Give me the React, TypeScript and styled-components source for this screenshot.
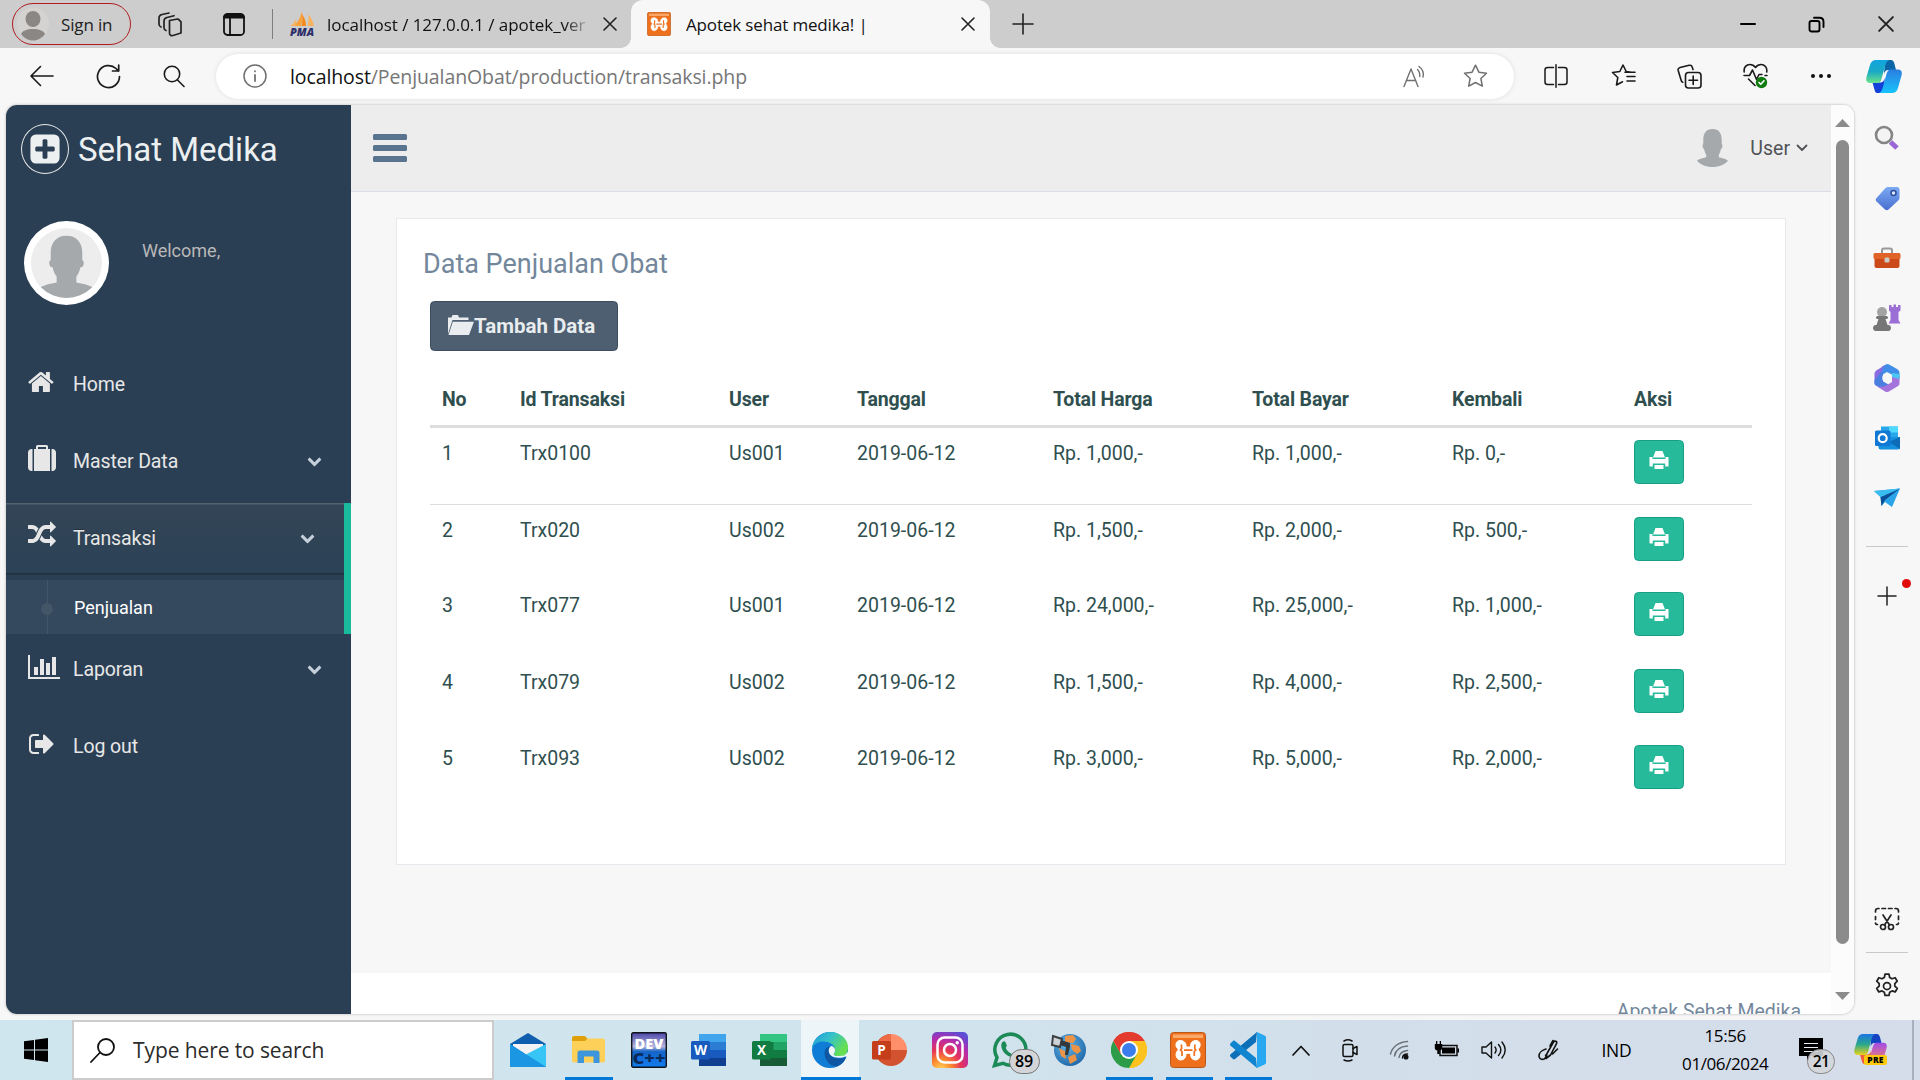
import React from "react";
import styled, { createGlobalStyle, css } from "styled-components";

const ui = `"Open Sans", "Noto Sans", sans-serif`;
const web = `Roboto, "Liberation Sans", sans-serif`;

const GlobalStyle = createGlobalStyle`
  * { box-sizing: border-box; }
  body { margin: 0; background: #f7f7f7; overflow: hidden; }
  svg { display: block; flex: none; }
`;

/* ---------- shared ---------- */

const Screen = styled.div`
  width: 1920px;
  height: 1080px;
  display: flex;
  flex-direction: column;
  overflow: hidden;
  background: #f7f7f7;
  font-family: ${ui};
  white-space: nowrap;
`;

const Cell = styled.div<{ w: number }>`
  width: ${(p) => p.w}px;
  height: 100%;
  flex: none;
  display: flex;
  align-items: center;
  justify-content: center;
`;

const Spacer = styled.div`
  flex: 1;
`;

/* ---------- tab strip ---------- */

const TabStrip = styled.div`
  height: 48px;
  flex: none;
  display: flex;
  align-items: center;
  background: #cdcdcd;
  color: #111;
`;

const SignIn = styled.button`
  width: 119px;
  height: 42px;
  margin-left: 12px;
  padding: 0 0 0 4px;
  display: flex;
  align-items: center;
  gap: 12px;
  border: 1.5px solid #b01c22;
  border-radius: 21px;
  background: transparent;
  font: 17px ${ui};
  letter-spacing: -0.15px;
  color: #222;
`;

const StripDivider = styled.div`
  width: 1px;
  height: 30px;
  margin-left: 13px;
  background: #7d7d7d;
`;

const IdleTab = styled.div`
  width: 358px;
  height: 48px;
  padding: 0 14px 0 16px;
  display: flex;
  align-items: center;
  gap: 12px;
  font-size: 17px;
`;

const TabTitle = styled.span<{ fade?: boolean; spacing: number }>`
  flex: 1;
  overflow: hidden;
  letter-spacing: ${(p) => p.spacing}px;
  ${(p) =>
    p.fade &&
    css`
      mask-image: linear-gradient(90deg, #000 90%, transparent 100%);
    `}
`;

const ActiveTab = styled.div`
  position: relative;
  width: 359px;
  height: 48px;
  padding: 0 15px 0 16px;
  display: flex;
  align-items: center;
  gap: 15px;
  border-radius: 12px 12px 0 0;
  background: #f7f7f7;
  font-size: 17px;
  &::before,
  &::after {
    content: "";
    position: absolute;
    bottom: 0;
    width: 10px;
    height: 10px;
  }
  &::before {
    left: -10px;
    background: radial-gradient(circle at 0 0, transparent 9.5px, #f7f7f7 10px);
  }
  &::after {
    right: -10px;
    background: radial-gradient(circle at 100% 0, transparent 9.5px, #f7f7f7 10px);
  }
`;

/* ---------- address row ---------- */

const AddressRow = styled.div`
  height: 57px;
  flex: none;
  display: flex;
  align-items: center;
  padding: 0 0 1px 9px;
  background: #f7f7f7;
  color: #1a1a1a;
`;

const Omnibox = styled.div`
  width: 1302px;
  height: 45px;
  margin: 0 14px 0 9px;
  padding: 0 26px 0 27px;
  display: flex;
  align-items: center;
  border-radius: 23px;
  background: #fff;
  box-shadow: 0 0 5px rgba(0, 0, 0, 0.1);
  color: #707070;
`;

const Url = styled.span`
  margin-left: 23px;
  flex: 1;
  font-size: 19.5px;
  letter-spacing: -0.1px;
  color: #767676;
  b {
    font-weight: 400;
    color: #111;
  }
`;

/* ---------- body ---------- */

const Body = styled.div`
  height: 915px;
  flex: none;
  display: flex;
  padding-left: 6px;
`;

const Viewport = styled.div`
  width: 1848px;
  height: 909px;
  display: flex;
  overflow: hidden;
  border-radius: 11px 11px 13px 11px;
  background: #fff;
  box-shadow: 0 0 3px rgba(0, 0, 0, 0.28);
  font-family: ${web};
`;

const SideNav = styled.aside`
  width: 345px;
  flex: none;
  background: #2a3f54;
  color: #e7e7e7;
`;

const Brand = styled.div`
  height: 88px;
  padding-left: 15px;
  display: flex;
  align-items: center;
  gap: 9px;
  font-size: 33px;
  color: #ecf0f1;
`;

const BrandRing = styled.div`
  width: 48px;
  height: 50px;
  display: flex;
  align-items: center;
  justify-content: center;
  border: 1px solid #eaeaea;
  border-radius: 50%;
`;

const Profile = styled.div`
  height: 153px;
  padding: 28px 0 0 18px;
  display: flex;
  gap: 33px;
  font-size: 18px;
  color: #bab8b8;
`;

const Portrait = styled.div`
  width: 85px;
  height: 84px;
  border: 7px solid #fff;
  border-radius: 50%;
  background: #ededed;
  overflow: hidden;
`;

const Welcome = styled.span`
  margin-top: 19px;
  line-height: 22px;
`;

const MenuItem = styled.div<{ h: number; active?: boolean }>`
  height: ${(p) => p.h}px;
  padding: 0 29px 0 22px;
  display: flex;
  align-items: center;
  font-size: 19.5px;
  letter-spacing: -0.1px;
  ${(p) =>
    p.active &&
    css`
      text-shadow: rgba(0, 0, 0, 0.25) 0 -1px 0;
      background: linear-gradient(#334556, #2c4257);
      box-shadow: rgba(0, 0, 0, 0.25) 0 1.5px 0, inset rgba(255, 255, 255, 0.16) 0 1.5px 0;
    `}
`;

const MenuIcon = styled.span`
  width: 45px;
  padding-bottom: 6px;
`;

const MenuLabel = styled.span`
  flex: 1;
`;

const ActiveGroup = styled.div`
  margin-top: 3px;
  height: 131px;
  border-right: 7px solid #1abb9c;
  display: flex;
  flex-direction: column;
  justify-content: space-between;
`;

const SubItem = styled.div`
  height: 54px;
  display: flex;
  align-items: center;
  background: #34495e;
  font-size: 18px;
  color: #fff;
`;

const Branch = styled.span`
  width: 68px;
  height: 54px;
  padding-left: 35px;
  display: flex;
  align-items: center;
  background: linear-gradient(#425668, #425668) 41px 0 / 1px 100% no-repeat;
  &::before {
    content: "";
    width: 12px;
    height: 12px;
    margin-top: 3px;
    border-radius: 50%;
    background: #425668;
  }
`;

const Main = styled.main`
  width: 1480px;
  flex: none;
  display: flex;
  flex-direction: column;
`;

const TopNav = styled.div`
  height: 87px;
  flex: none;
  padding: 0 23px 0 22px;
  display: flex;
  align-items: center;
  background: #ededed;
  border-bottom: 1px solid #d9dee4;
  font-size: 19.5px;
  color: #515356;
`;

const Burger = styled.div`
  width: 34px;
  height: 28px;
  display: flex;
  flex-direction: column;
  justify-content: space-between;
  i {
    height: 6px;
    border-radius: 1.5px;
    background: #5a738e;
  }
`;

const UserName = styled.span`
  margin: 0 6px 0 22px;
`;

const Content = styled.div`
  height: 781px;
  flex: none;
  padding: 26px 0 0 45px;
  background: #f7f7f7;
`;

const Card = styled.section`
  width: 1390px;
  height: 647px;
  padding: 25px 33px 0;
  border: 1px solid #e6e9ed;
  background: #fff;
`;

const CardTitle = styled.h2`
  margin: 0 0 17px -7px;
  font-size: 27px;
  font-weight: 400;
  line-height: 40px;
  color: #73879c;
`;

const AddButton = styled.button`
  width: 188px;
  height: 50px;
  padding: 0 0 0 17px;
  display: flex;
  align-items: center;
  border: 1.5px solid #394d5f;
  border-radius: 4.5px;
  background: #4d5f70;
  font: 700 20.5px ${web};
  color: #e9edef;
  svg {
    margin-top: -3px;
  }
`;

const Table = styled.table`
  width: 1322px;
  margin-top: 22px;
  table-layout: fixed;
  border-collapse: separate;
  border-spacing: 0;
  font-size: 19.5px;
  line-height: 27px;
  color: #2f4f4f;
`;

const Th = styled.th<{ w: number }>`
  width: ${(p) => p.w}px;
  height: 55px;
  padding: 0 0 12px 12px;
  vertical-align: bottom;
  text-align: left;
  font-weight: 700;
  letter-spacing: -0.15px;
  border-bottom: 3px solid #ddd;
`;

const Tr = styled.tr<{ h: number }>`
  height: ${(p) => p.h}px;
  & + & td {
    border-top: 1px solid #ddd;
  }
`;

const Td = styled.td`
  padding: 12px 0 0 12px;
  vertical-align: top;
`;

const PrintButton = styled.button`
  width: 50px;
  height: 44px;
  padding: 0 0 4px;
  display: flex;
  align-items: center;
  justify-content: center;
  border: 1.5px solid #169f85;
  border-radius: 4.5px;
  background: #26b99a;
`;

const Footer = styled.footer`
  height: 41px;
  padding: 25px 30px 0 0;
  text-align: right;
  line-height: 27px;
  font-size: 19.5px;
  color: #73879c;
  overflow: hidden;
`;

const Scroll = styled.div`
  width: 23px;
  padding: 14px 0;
  display: flex;
  flex-direction: column;
  align-items: center;
  background: #fcfcfc;
`;

const Thumb = styled.div`
  width: 13px;
  height: 805px;
  margin: 13px 0 48px;
  border-radius: 7px;
  background: #8b8b8b;
`;

/* ---------- edge rail ---------- */

const Rail = styled.div`
  width: 66px;
  display: flex;
  flex-direction: column;
  align-items: center;
  padding-top: 3px;
`;

const RailSlot = styled.div<{ h?: number }>`
  position: relative;
  width: 60px;
  height: ${(p) => p.h ?? 60}px;
  display: flex;
  align-items: center;
  justify-content: center;
`;

const RailLine = styled.div`
  width: 42px;
  height: 1px;
  background: #c9c9c9;
`;

const RedDot = styled.i`
  position: absolute;
  right: 6px;
  top: 8px;
  width: 9px;
  height: 9px;
  border-radius: 50%;
  background: #e00b0b;
`;

/* ---------- taskbar ---------- */

const Taskbar = styled.div`
  height: 60px;
  flex: none;
  display: flex;
  align-items: center;
  background: linear-gradient(90deg, #cfe6ee 0%, #d0e4ed 45%, #d2dfea 70%, #d5dcea 100%);
  color: #000;
`;

const SearchBox = styled.div`
  width: 432px;
  height: 60px;
  padding-left: 16px;
  display: flex;
  align-items: center;
  gap: 18px;
  border: 2px solid #ccc;
  background: #fff;
  font-size: 21px;
  letter-spacing: -0.1px;
  color: #2b2b2b;
`;

const TaskSlot = styled.div<{ w: number; line?: number; lit?: boolean }>`
  position: relative;
  width: ${(p) => p.w}px;
  height: 60px;
  display: flex;
  align-items: center;
  justify-content: center;
  ${(p) =>
    p.lit &&
    css`
      background: #edf5f9;
      background-clip: content-box;
      padding: 0 1px;
    `}
  ${(p) =>
    p.line &&
    css`
      &::after {
        content: "";
        position: absolute;
        bottom: 0;
        left: ${(p.w - p.line) / 2}px;
        width: ${p.line}px;
        height: 3px;
        background: #0078d7;
      }
    `}
`;

const CountPill = styled.span`
  position: absolute;
  right: 0;
  top: 29px;
  width: 31px;
  height: 25px;
  border: 1px solid #777;
  border-radius: 13px;
  background: #d3d5d8;
  font-size: 16px;
  font-weight: 600;
  line-height: 23px;
  text-align: center;
`;

const Lang = styled.span`
  width: 30px;
  margin: 0 47px 0 22px;
  font-size: 17.5px;
  letter-spacing: -0.2px;
`;

const Clock = styled.div`
  width: 96px;
  display: flex;
  flex-direction: column;
  align-items: center;
  font-size: 17px;
  line-height: 28px;
  letter-spacing: -0.4px;
`;

const Notice = styled.div`
  position: relative;
  margin-left: 27px;
  width: 37px;
  height: 60px;
  padding-top: 18px;
`;

const NoticeCount = styled.span`
  position: absolute;
  right: 0;
  top: 29px;
  width: 28px;
  height: 25px;
  border: 1px solid #888;
  border-radius: 14px;
  background: rgba(211, 213, 216, 0.9);
  font-size: 15.5px;
  font-weight: 600;
  line-height: 23px;
  text-align: center;
  letter-spacing: -0.5px;
`;

const CopilotBox = styled.div`
  position: relative;
  margin-left: 19px;
  width: 33px;
  height: 32px;
`;

const PreTag = styled.span`
  position: absolute;
  right: 0;
  bottom: 1px;
  width: 23px;
  height: 10px;
  border-radius: 2px;
  background: #ffc90e;
  font-size: 8.5px;
  font-weight: 800;
  line-height: 10px;
  text-align: center;
  letter-spacing: 0.2px;
`;

const EndLine = styled.div`
  width: 2px;
  height: 60px;
  margin: 0 6px 0 25px;
  background: #a9b0bd;
`;

/* ---------- icons ---------- */

type LineProps = { w?: number; h?: number; sw?: number; vb?: string; c?: string; children: React.ReactNode };
const Line = ({ w = 24, h = 24, sw = 1.5, vb = "0 0 24 24", c = "currentColor", children }: LineProps) => (
  <svg width={w} height={h} viewBox={vb} fill="none" stroke={c} strokeWidth={sw} strokeLinecap="round" strokeLinejoin="round">
    {children}
  </svg>
);

const Glyph = ({ d, w = 28, h = 28, vb = "0 0 1792 1792" }: { d: string; w?: number; h?: number; vb?: string }) => (
  <svg width={w} height={h} viewBox={vb} fill="currentColor">
    <path d={d} />
  </svg>
);

const glyphs = {
  plusSquare:
    "M1408 960v-128q0-26-19-45t-45-19h-320v-320q0-26-19-45t-45-19h-128q-26 0-45 19t-19 45v320h-320q-26 0-45 19t-19 45v128q0 26 19 45t45 19h320v320q0 26 19 45t45 19h128q26 0 45-19t19-45v-320h320q26 0 45-19t19-45zm256-544v960q0 119-84.5 203.5t-203.5 84.5h-960q-119 0-203.5-84.5t-84.5-203.5v-960q0-119 84.5-203.5t203.5-84.5h960q119 0 203.5 84.5t84.5 203.5z",
  home: "M1472 992v480q0 26-19 45t-45 19h-384v-384h-256v384h-384q-26 0-45-19t-19-45v-480q0-1 .5-3t.5-3l575-474 575 474q1 2 1 6zm223-69l-62 74q-8 9-21 11h-3q-13 0-21-7l-692-577-692 577q-12 8-24 7-13-2-21-11l-62-74q-8-10-7-23.5t11-21.5l719-599q32-26 76-26t76 26l244 204v-195q0-14 9-23t23-9h192q14 0 23 9t9 23v408l219 182q10 8 11 21.5t-7 23.5z",
  suitcase:
    "M640 256h512v-128h-512v128zm-352 0v1408h-64q-92 0-158-66t-66-158v-960q0-92 66-158t158-66h64zm1120 0v1408h-1024v-1408h128v-160q0-40 28-68t68-28h576q40 0 68 28t28 68v160h128zm384 224v960q0 92-66 158t-158 66h-64v-1408h64q92 0 158 66t66 158z",
  random:
    "M666 481q-60 92-137 273-22-45-37-72.5t-40.5-63.5-51-56.5-63-35-81.5-14.5h-224q-14 0-23-9t-9-23v-192q0-14 9-23t23-9h224q250 0 410 225zm1126 799q0 14-9 23l-320 320q-9 9-23 9-13 0-22.5-9.5t-9.5-22.5v-192q-32 0-85 .5t-81 1-73-1-71-5-64-10.5-63-18.5-58-28.5-59-40-55-53.5-56-69.5q59-93 136-273 22 45 37 72.5t40.5 63.5 51 56.5 63 35 81.5 14.5h256v-192q0-14 9-23t23-9q12 0 24 10l319 319q9 9 9 23zm0-896q0 14-9 23l-320 320q-9 9-23 9-13 0-22.5-9.5t-9.5-22.5v-192h-256q-48 0-87 15t-69 45-51 61.5-45 77.5q-32 62-78 171-29 66-49.5 111t-54 105-64 100-74 83-90 68.5-106.5 42-128 16.5h-224q-14 0-23-9t-9-23v-192q0-14 9-23t23-9h224q48 0 87-15t69-45 51-61.5 45-77.5q32-62 78-171 29-66 49.5-111t54-105 64-100 74-83 90-68.5 106.5-42 128-16.5h256v-192q0-14 9-23t23-9q12 0 24 10l319 319q9 9 9 23z",
  chart:
    "M640 896v512h-256v-512h256zm384-512v1024h-256v-1024h256zm1024 1152v128h-2048v-1536h128v1408h1920zm-640-896v768h-256v-768h256zm384-384v1152h-256v-1152h256z",
  signOut:
    "M704 1440q0 4 1 20t.5 26.5-3 23.5-10 19.5-20.5 6.5h-320q-119 0-203.5-84.5t-84.5-203.5v-704q0-119 84.5-203.5t203.5-84.5h320q13 0 22.5 9.5t9.5 22.5q0 4 1 20t.5 26.5-3 23.5-10 19.5-20.5 6.5h-320q-66 0-113 47t-47 113v704q0 66 47 113t113 47h312l11.5 1 11.5 3 8 5.5 7 9 2 13.5zm928-544q0 26-19 45l-544 544q-19 19-45 19t-45-19-19-45v-288h-448q-26 0-45-19t-19-45v-384q0-26 19-45t45-19h448v-288q0-26 19-45t45-19 45 19l544 544q19 19 19 45z",
  chevron:
    "M1683 808l-742 741q-19 19-45 19t-45-19l-742-741q-19-19-19-45.5t19-45.5l166-165q19-19 45-19t45 19l531 531 531-531q19-19 45-19t45 19l166 165q19 19 19 45.5t-19 45.5z",
};

const Chevron = () => (
  <svg width="15" height="15" viewBox="0 100 1792 1792" fill="#c4cfda">
    <path d={glyphs.chevron} />
  </svg>
);

const Silhouette = ({ w, h, vb, face }: { w: number; h: number; vb: string; face?: boolean }) => (
  <svg width={w} height={h} viewBox={vb} preserveAspectRatio="none">
    {face && (
      <path
        fill="#a5a9ac"
        d="M36 8c-11 0-16 8-16 17v8c-2 1-2 5 0 7 1 0 2 0 2 1 1 4 2 7 4 9v6c-6 1-15 3-20 7v12h60V63c-5-4-14-6-20-7v-6c2-2 3-5 4-9 0-1 1-1 2-1 2-2 2-6 0-7v-8c0-9-5-17-16-17z"
      />
    )}
    {!face && (
      <path
        fill="#a5a9ac"
        d="M16 0C9 0 6.500 5 6.500 11v4c-1 1-1 4 0 5l1 1c.5 3 1.500 4.500 2 5.500V29c-2.500 1-7 1-9.500 3.500C3 36 9 39 16 39s13-3 16-6.500c-2.500-2.500-7-2.500-9.500-3.500v-2.500c.5-1 1.500-2.500 2-5.500l1-1c1-1 1-4 0-5v-4C25.500 5 23 0 16 0z"
      />
    )}
  </svg>
);

const CloseX = ({ s = 14, sw = 1.6 }) => (
  <Line w={s} h={s} vb="0 0 14 14" sw={sw} c="#222">
    <path d="M1 1l12 12M13 1L1 13" />
  </Line>
);

const Xampp = ({ s }: { s: number }) => (
  <svg width={s} height={s} viewBox="0 0 36 36">
    <rect x=".5" y=".5" width="35" height="35" rx="3" fill="#ee6f1c" stroke="#b9561a" />
    <path d="M3 2.500h30v3.500H3z" fill="#f9a868" />
    <path
      d="M10 8.500c-4 0-5.500 5-2.500 8 .7.700.7 1.500 0 2.200-3 3.500-1 9.300 3.200 9.300 3.300 0 5.300-2.500 5.300-5.500v-1.200h4.500v1.200c0 3 2 5.500 5 5.500 4.500 0 6-6 3.200-9.300-.7-.7-.7-1.500 0-2.200 3-3.300 1.300-8-2.700-8-3.500 0-5.500 2.500-5.500 5v1.500H16V13.500c0-2.500-2-5-6-5z"
      fill="#fff"
      stroke="#fff"
      strokeWidth="1"
    />
    <path d="M11.500 12.500v4.500l-1 1 1.500 1.500v4.500M24.800 12.500v4.500l1 1-1.500 1.500v4.500M14 18.200h8.500" stroke="#ee6f1c" strokeWidth="1.700" fill="none" />
  </svg>
);

const Pma = () => (
  <svg width="26" height="26" viewBox="0 0 26 26">
    <path d="M12.500 0c1 5 1 10-.5 15H5c4-4 7-9 7.500-15z" fill="#f7a23b" />
    <path d="M13 3c3 4 4 8 4 12h-4.500c1-4 1-8 .5-12z" fill="#f68a1e" />
    <path d="M19.500 3c3 4 4.500 8 5.500 12h-6.500c1-4 1.500-8 1-12zM7 8c.5 3 0 5-1 7H1c3-2 5-4 6-7z" fill="#f9b25d" />
    <text x="13" y="25" textAnchor="middle" fontFamily="Open Sans, sans-serif" fontWeight="800" fontStyle="italic" fontSize="10.500" textLength="24" lengthAdjust="spacingAndGlyphs" fill="#2d2f6b">
      PMA
    </text>
  </svg>
);

const Copilot = ({ w = 36, h = 33, warm }: { w?: number; h?: number; warm?: boolean }) => {
  const id = warm ? "cw" : "cc";
  return (
    <svg width={w} height={h} viewBox="0 0 36 33" preserveAspectRatio="none">
      <defs>
        <linearGradient id={id + "a"} x1="0" y1="0" x2="0" y2="1">
          <stop offset="0" stopColor={warm ? "#1b74e4" : "#11a5e0"} />
          <stop offset=".5" stopColor={warm ? "#2aa88c" : "#1aa9c4"} />
          <stop offset="1" stopColor={warm ? "#e8d21d" : "#6be28a"} />
        </linearGradient>
        <linearGradient id={id + "b"} x1="0" y1="0" x2="0" y2="1">
          <stop offset="0" stopColor={warm ? "#a04be8" : "#2b7de0"} />
          <stop offset="1" stopColor={warm ? "#ff8a5c" : "#17c3fb"} />
        </linearGradient>
      </defs>
      <path d="M19 0h6c2 0 3 2 3.500 4l1.500 6h-8c-2 0-3.500 2-4 4z" fill={warm ? "#1643c4" : "#0b66a8"} />
      <path d="M17 33h-5c-3 0-3-2-4-5l-1.500-5.500H15c2 0 3.500-3 4-5z" fill={warm ? "#f0603c" : "#1340d8"} />
      <path d="M10 0h13c-2.500 1-3.500 4-4.500 8l-3 11c-1 3-2 4-4 4H4c-3 0-4.500-2-3.500-6L4 5c1-3.500 3-5 6-5z" fill={`url(#${id}a)`} />
      <path d="M26 33H13c2.500-1 3.500-4 4.500-8l3-11c1-3 2-4.500 4-4.500H32c3 0 4.500 2 3.500 6L32 28c-1 3.500-3 5-6 5z" fill={`url(#${id}b)`} />
    </svg>
  );
};

const Office = ({ letter, dark, tones }: { letter: string; dark: string; tones: string[] }) => (
  <svg width="36" height="34" viewBox="0 0 36 34">
    {tones.length === 3 ? (
      <g>
        <path d="M19 1a16 16 0 0 1 16 16H19z" fill={tones[0]} />
        <path d="M19 1v16h16a16 16 0 1 1-16-16z" fill={tones[2]} />
        <path d="M19 1v16H4A16 16 0 0 1 19 1z" fill={tones[1]} />
      </g>
    ) : (
      tones.map((t, i) => <rect key={i} x="8" y={1 + i * 8} width="27" height="8" fill={t} />)
    )}
    {letter === "X" && <path d="M8 9h13.500v16H8z" fill="#107c41" />}
    <rect x="0" y="8" width="19" height="18.500" rx="1.500" fill={dark} />
    <text x="9.500" y="22" textAnchor="middle" fontFamily="Open Sans, sans-serif" fontWeight="700" fontSize="13.500" fill="#fff">
      {letter}
    </text>
  </svg>
);

const Up = () => (
  <svg width="15" height="8" viewBox="0 0 15 8" fill="#8b8b8b">
    <path d="M7.500 0L15 8H0z" />
  </svg>
);
const Down = () => (
  <svg width="15" height="8" viewBox="0 0 15 8" fill="#8b8b8b">
    <path d="M7.500 8L15 0H0z" />
  </svg>
);

/* ---------- data ---------- */

const columns: [string, number][] = [
  ["No", 78],
  ["Id Transaksi", 209],
  ["User", 128],
  ["Tanggal", 196],
  ["Total Harga", 199],
  ["Total Bayar", 200],
  ["Kembali", 182],
  ["Aksi", 130],
];

const rows = [
  ["1", "Trx0100", "Us001", "2019-06-12", "Rp. 1,000,-", "Rp. 1,000,-", "Rp. 0,-"],
  ["2", "Trx020", "Us002", "2019-06-12", "Rp. 1,500,-", "Rp. 2,000,-", "Rp. 500,-"],
  ["3", "Trx077", "Us001", "2019-06-12", "Rp. 24,000,-", "Rp. 25,000,-", "Rp. 1,000,-"],
  ["4", "Trx079", "Us002", "2019-06-12", "Rp. 1,500,-", "Rp. 4,000,-", "Rp. 2,500,-"],
  ["5", "Trx093", "Us002", "2019-06-12", "Rp. 3,000,-", "Rp. 5,000,-", "Rp. 2,000,-"],
];
const rowHeights = [76, 76, 77, 76, 77];

/* ---------- sections ---------- */

const Tabs = () => (
  <TabStrip>
    <SignIn>
      <svg width="32" height="34" viewBox="0 0 32 34">
        <ellipse cx="16" cy="17" rx="16" ry="16.500" fill="#d5d3d1" />
        <ellipse cx="16" cy="12" rx="7.500" ry="8" fill="#8b8784" />
        <path d="M4 27c1-3 6-5 12-5s11 2 12 5c-3 4-7 6.500-12 6.500S7 31 4 27z" fill="#8b8784" />
      </svg>
      Sign in
    </SignIn>
    <Cell w={77}>
      <Line w={26} h={25} vb="0 0 26 25" sw={1.7} c="#222">
        <path d="M12.500 8.500l8-1.500a1.500 1.500 0 0 1 1 .3l2.500 2.500V21l-8 2.500c-2 .5-3.500-.5-3.500-2.500z" />
        <path d="M9 18.500c-1.500-.5-2-1.500-2-3V9c0-2 1-3 3-3.500l7-1.800M4 15c-1.500-.5-2-1.500-2-3V6c0-2 1-3 3-3.500l7-1.500" />
      </Line>
    </Cell>
    <Cell w={51}>
      <Line w={22} h={23} vb="0 0 22 23" sw={1.8} c="#111">
        <rect x="1" y="1" width="20" height="21" rx="3.500" />
        <path d="M1.500 4h19M2 2.800h18" strokeWidth="3" />
        <path d="M7 5v16" />
      </Line>
    </Cell>
    <StripDivider />
    <IdleTab>
      <Pma />
      <TabTitle fade spacing={-0.05}>
        localhost / 127.0.0.1 / apotek_ver
      </TabTitle>
      <CloseX />
    </IdleTab>
    <ActiveTab>
      <Xampp s={24} />
      <TabTitle spacing={-0.15}>Apotek sehat medika! |</TabTitle>
      <CloseX />
    </ActiveTab>
    <Cell w={66}>
      <Line w={22} h={22} vb="0 0 22 22" sw={1.6} c="#222">
        <path d="M11 1v20M1 11h20" />
      </Line>
    </Cell>
    <Spacer />
    <Cell w={69}>
      <Line w={16} h={16} vb="0 0 16 16" sw={2} c="#000">
        <path d="M1 8h14" />
      </Line>
    </Cell>
    <Cell w={69}>
      <Line w={17} h={17} vb="0 0 17 17" sw={1.9} c="#000">
        <rect x="1.500" y="5" width="10" height="10.500" rx="2" />
        <path d="M6 1.800h5.500c2.500 0 4 1.500 4 4V11" />
      </Line>
    </Cell>
    <Cell w={69}>
      <CloseX s={16} sw={1.7} />
    </Cell>
  </TabStrip>
);

const Address = () => (
  <AddressRow>
    <Cell w={66}>
      <Line w={26} sw={1.6} vb="0 0 26 24">
        <path d="M24 12H2M11.500 2.500L2 12l9.500 9.500" />
      </Line>
    </Cell>
    <Cell w={66}>
      <Line w={25} h={25} sw={1.700} vb="0 0 25 25">
        <path d="M23.500 12.500a11 11 0 1 1-3.500-8l2.500 2.500M22.700 1v6h-6.200" />
      </Line>
    </Cell>
    <Cell w={66}>
      <Line w={22} h={23} sw={1.600} vb="0 0 22 23">
        <circle cx="9" cy="9" r="7.700" />
        <path d="M14.500 15l6.500 6.500" />
      </Line>
    </Cell>
    <Omnibox>
      <Line w={24} h={24} sw={1.500}>
        <circle cx="12" cy="12" r="11" />
        <path d="M12 11v6M12 7.200v.2" strokeWidth="1.800" />
      </Line>
      <Url>
        <b>localhost</b>/PenjualanObat/production/transaksi.php
      </Url>
      <Line w={24} h={23} vb="0 0 24 23" sw={1.400}>
        <path d="M1 21.500L8 4l7 17.500M3.300 15.500h9.500M14.500 4.500c1.700 1.500 2.500 4 2.300 7M16 1.500c3.500 2.500 5 6.500 4 10.500" />
      </Line>
      <Cell w={36} />
      <Line w={25} h={24} vb="0 0 25 24" sw={1.500}>
        <path d="M12.500 1.200l3.400 7 7.600 1-5.600 5.300 1.400 7.700-6.800-3.700-6.800 3.700 1.400-7.700L1.500 9.200l7.600-1z" />
      </Line>
    </Omnibox>
    <Cell w={56}>
      <Line w={24} h={24}>
        <path d="M12 .8v22.400M9.500 3.500H3.500c-1.500 0-2.500 1-2.500 2.500v12c0 1.500 1 2.500 2.500 2.500h6M14.500 3.500h6c1.500 0 2.500 1 2.500 2.500v12c0 1.500-1 2.500-2.500 2.500h-6" />
      </Line>
    </Cell>
    <Cell w={78}>
      <Line w={25} h={24} vb="0 0 25 24" sw={1.600}>
        <path d="M20.500 8.200l-5.300-.7-3.200-6.500-3.200 6.500-7.300 1 5.300 5-1.300 7.500 6-3.200M16 12.500h8M16 17h8M14 8.200h10" />
      </Line>
    </Cell>
    <Cell w={54}>
      <Line w={25} h={25} vb="0 0 25 25" sw={1.600}>
        <rect x="8.500" y="8.500" width="15.500" height="15.500" rx="3" />
        <path d="M16.200 12v8.500M12 16.200h8.500M16 5.500l-.8-2.500c-.4-1.500-1.500-2-3-1.700L3 3.500C1.500 4 .8 5 1.200 6.500l3 10c.3 1 .8 1.500 1.500 1.700" />
      </Line>
    </Cell>
    <Cell w={78}>
      <Line w={25} h={26} vb="0 0 25 26" sw={1.600}>
        <path d="M1.200 9C.5 4 3.500 1.500 7 1.500c2.500 0 4 1 5.500 3 1.500-2 3-3 5.500-3 3.500 0 6.500 3 5.700 7.500M1 12.500h5.500L9.500 7l4 9.500 2.500-5h3M22 12.500h2M5.500 16l6.500 6.500" />
        <circle cx="18.500" cy="19.500" r="5.700" fill="#107c10" stroke="none" />
        <path d="M16 19.500l1.800 1.800 3.200-3.500" stroke="#fff" />
      </Line>
    </Cell>
    <Cell w={54}>
      <svg width="22" height="6" viewBox="0 0 22 6">
        <circle cx="3" cy="3" r="2" fill="#111" />
        <circle cx="11" cy="3" r="2" fill="#111" />
        <circle cx="19" cy="3" r="2" fill="#111" />
      </svg>
    </Cell>
    <Cell w={72}>
      <Copilot />
    </Cell>
  </AddressRow>
);

const Navigation = () => (
  <SideNav>
    <Brand>
      <BrandRing>
        <Glyph d={glyphs.plusSquare} w={34} h={34} />
      </BrandRing>
      Sehat Medika
    </Brand>
    <Profile>
      <Portrait>
        <Silhouette w={71} h={70} vb="0 0 72 72" face />
      </Portrait>
      <Welcome>Welcome,</Welcome>
    </Profile>
    <MenuItem h={77}>
      <MenuIcon>
        <Glyph d={glyphs.home} vb="70 0 1792 1792" />
      </MenuIcon>
      <MenuLabel>Home</MenuLabel>
    </MenuItem>
    <MenuItem h={77}>
      <MenuIcon>
        <Glyph d={glyphs.suitcase} />
      </MenuIcon>
      <MenuLabel>Master Data</MenuLabel>
      <Chevron />
    </MenuItem>
    <ActiveGroup>
      <MenuItem h={70} active>
        <MenuIcon>
          <Glyph d={glyphs.random} />
        </MenuIcon>
        <MenuLabel>Transaksi</MenuLabel>
        <Chevron />
      </MenuItem>
      <SubItem>
        <Branch />
        Penjualan
      </SubItem>
    </ActiveGroup>
    <MenuItem h={71}>
      <MenuIcon>
        <Glyph d={glyphs.chart} w={32} vb="0 0 2048 1792" />
      </MenuIcon>
      <MenuLabel>Laporan</MenuLabel>
      <Chevron />
    </MenuItem>
    <MenuItem h={83}>
      <MenuIcon>
        <Glyph d={glyphs.signOut} />
      </MenuIcon>
      <MenuLabel>Log out</MenuLabel>
    </MenuItem>
  </SideNav>
);

const Page = () => (
  <Main>
    <TopNav>
      <Burger>
        <i />
        <i />
        <i />
      </Burger>
      <Spacer />
      <Silhouette w={31} h={38} vb="0 0 32 39" />
      <UserName>User</UserName>
      <Line w={12} h={8} vb="0 0 12 8" sw={1.800}>
        <path d="M1.500 1.500L6 6l4.500-4.500" />
      </Line>
    </TopNav>
    <Content>
      <Card>
        <CardTitle>Data Penjualan Obat</CardTitle>
        <AddButton>
          <svg width="26" height="20" viewBox="0 0 26 20" fill="#e9edef">
            <path d="M0 19V2.500h3.500L4.500 0h5.500l1 2.500h9.500V5H4.500z" />
            <path d="M4.800 6.800H26L21 20H.5z" />
          </svg>
          Tambah Data
        </AddButton>
        <Table>
          <thead>
            <tr>
              {columns.map(([name, w]) => (
                <Th key={name} w={w}>
                  {name}
                </Th>
              ))}
            </tr>
          </thead>
          <tbody>
            {rows.map((row, i) => (
              <Tr key={i} h={rowHeights[i]}>
                {row.map((value, j) => (
                  <Td key={j}>{value}</Td>
                ))}
                <Td>
                  <PrintButton>
                    <svg width="20" height="18" viewBox="0 0 20 18" fill="#fff">
                      <path d="M6.500 0h7L16 6.500H4z" />
                      <path d="M.5 6h3v2h13V6h3v9.500h-3.300V12.500H3.800v3H.5z" />
                      <path d="M5.500 14h9v4h-9z" />
                    </svg>
                  </PrintButton>
                </Td>
              </Tr>
            ))}
          </tbody>
        </Table>
      </Card>
    </Content>
    <Footer>Apotek Sehat Medika</Footer>
  </Main>
);

const EdgeRail = () => (
  <Rail>
    <RailSlot>
      <svg width="26" height="26" viewBox="0 0 26 26">
        <circle cx="10" cy="10" r="8" fill="#f4f4f4" stroke="#858585" strokeWidth="2.600" />
        <path d="M16.500 17l6.500 6" stroke="#9a67d4" strokeWidth="5" />
      </svg>
    </RailSlot>
    <RailSlot>
      <svg width="25" height="25" viewBox="0 0 25 25">
        <defs>
          <linearGradient id="tag" x1="0" y1="0" x2="0" y2="1">
            <stop offset="0" stopColor="#7aa9f2" />
            <stop offset="1" stopColor="#4a6fd0" />
          </linearGradient>
        </defs>
        <path d="M13 1h9c1.500 0 2.500 1 2.500 2.500V12c0 1-.5 1.800-1 2.300L13.500 23.500c-1 1-2.500 1-3.500 0L1.500 15.500c-1-1-1-2.500 0-3.500L10.500 2C11.200 1.300 12 1 13 1z" fill="url(#tag)" />
        <circle cx="18.500" cy="7" r="2.500" fill="#dbe7fb" stroke="#2e4d9c" strokeWidth="1.500" />
      </svg>
    </RailSlot>
    <RailSlot>
      <svg width="28" height="22" viewBox="0 0 28 22">
        <path d="M9 6V3.500C9 2 10 1.500 11 1.500h6c1 0 2 .5 2 2V6" fill="none" stroke="#999" strokeWidth="2" />
        <rect x="1.500" y="9" width="25" height="12" rx="2" fill="#cc4a1a" />
        <rect x=".5" y="6" width="27" height="6" rx="1.500" fill="#e0632a" />
        <rect x="11.500" y="10.500" width="5" height="5" rx="1.500" fill="#ccc" />
      </svg>
    </RailSlot>
    <RailSlot>
      <svg width="28" height="28" viewBox="0 0 28 28">
        <path d="M16 1h2.500v2h2V.5H23v2.500h2V1h2.500v5.500L25.500 8v8l2 3.500h-12l2-3.500V8L16 6.500z" fill="#9c6fd6" />
        <circle cx="9" cy="8" r="5" fill="#a3a3a3" />
        <path d="M3 13.500c0-1 1-1.500 2-1.500h8c1 0 2 .5 2 1.500S14 15 13 15h-.5l2 6h1c1.500 0 2.500 1.500 2.500 3s-1 3-2.500 3H2.500C1 27 0 25.500 0 24s1-3 2.500-3h1l2-6H5c-1 0-2-.5-2-1.500z" fill="#767676" />
      </svg>
    </RailSlot>
    <RailSlot>
      <svg width="26" height="28" viewBox="0 0 26 28">
        <path d="M8 2.500L13 0c1 0 2 .5 3 1l7 4c1.500 1 2.500 2 2.500 4v6l-7-4-5.500-3-5 3V5z" fill="#3f8fe8" />
        <path d="M13 0L3 6C1.500 7 .5 8 .5 10v9c0 1 .5 2 1.500 2.500L8 24V8c0-3 2-6 5-8z" fill="#8a6be0" />
        <path d="M.5 16v3c0 1 .5 2 1.500 2.500L8 25l7-4-6-4V9L8 7z" fill="#4a7fe0" />
        <path d="M25.500 12v7c0 1.500-.5 2.500-1.500 3l-9 5.500c-1.500.7-3 .7-4 0L4 23l4-.5c2 0 3-.5 5-1.500l5-3V10z" fill="#a474dc" />
        <path d="M18 9l7.500 1v5L18 13z" fill="#4ac6f5" />
        <circle cx="13" cy="14" r="4.800" fill="#f7f7f7" />
      </svg>
    </RailSlot>
    <RailSlot>
      <svg width="25" height="24" viewBox="0 0 25 24">
        <path d="M6 .5h17v13H6z" fill="#28a8ea" />
        <path d="M14 .5h9v6h-9z" fill="#50d9ff" />
        <path d="M3.500 11.500L25 11v10.500c0 1-.5 2-2 2H5.500c-1 0-2-1-2-2z" fill="#1490df" />
        <path d="M14 16l11-5v12z" fill="#0c6cb8" />
        <rect x="0" y="4.500" width="15.500" height="15.500" rx="1.500" fill="#0f78d4" />
        <circle cx="7.700" cy="12.200" r="4" fill="none" stroke="#fff" strokeWidth="2.200" />
      </svg>
    </RailSlot>
    <RailSlot h={59}>
      <svg width="26" height="20" viewBox="0 0 26 20">
        <path d="M0 3L26 .5 18 19l-7-5-3.500 4-1-9z" fill="#2ba3e8" />
        <path d="M26 .5L6.500 9l1 9 3.500-6z" fill="#0b4f96" />
        <path d="M0 3L26 .5 6.500 9z" fill="#39bdf0" />
      </svg>
    </RailSlot>
    <RailSlot h={19} />
    <RailLine />
    <RailSlot h={24} />
    <RailSlot h={50}>
      <Line w={20} h={20} vb="0 0 20 20" sw={1.500} c="#222">
        <path d="M10 1v18M1 10h18" />
      </Line>
      <RedDot />
    </RailSlot>
    <RailSlot h={275} />
    <RailSlot h={46}>
      <Line w={26} h={24} vb="0 0 26 24" sw={1.700} c="#222">
        <path d="M1.500 9.500v3M1.500 5V4c0-1.500 1-2.500 2.500-2.500h1M8 1.500h3.500M14.500 1.500H18M21 1.500h1c1.500 0 2.500 1 2.500 2.500v1M24.500 9v3.500M1.500 16c0 1 .8 1.500 2 1.500M24.500 16c0 1-.8 1.500-2 1.500M9 8l6.500 10M17 8l-6.500 10" />
        <circle cx="9" cy="20" r="2.500" />
        <circle cx="17" cy="20" r="2.500" />
      </Line>
    </RailSlot>
    <RailSlot h={10} />
    <RailLine />
    <RailSlot h={66}>
      <Line w={28} h={28} vb="0 0 24 24" sw={1.500} c="#222">
        <circle cx="12" cy="12" r="3" />
        <path d="M10.300 1.900h3.400l.6 2.800 2 1.100 2.700-.9 1.800 3-2.100 2v2.200l2.100 2-1.800 3-2.700-.9-2 1.100-.6 2.800h-3.400l-.6-2.800-2-1.100-2.700.9-1.800-3 2.100-2V9.900l-2.100-2 1.800-3 2.700.9 2-1.100z" />
      </Line>
    </RailSlot>
  </Rail>
);

const Tasks = () => (
  <Taskbar>
    <Cell w={72}>
      <svg width="24" height="24" viewBox="0 0 24 24">
        <path d="M0 3.300l10-1.400v9.600H0zM11 1.800L24 0v11.500H11zM0 12.500h10v9.600L0 20.700zM11 12.500h13V24l-13-1.800z" />
      </svg>
    </Cell>
    <SearchBox>
      <Line w={25} h={25} vb="0 0 25 25" sw={1.800} c="#111">
        <circle cx="16" cy="9" r="8" />
        <path d="M10 14.500L1 24" />
      </Line>
      Type here to search
    </SearchBox>
    <Cell w={4} />
    <TaskSlot w={62}>
      <svg width="36" height="34" viewBox="0 0 36 34">
        <path d="M0 11L18 0l18 11v4H0z" fill="#0f5fae" />
        <path d="M3 11h30v14H3z" fill="#f4f2f5" />
        <path d="M0 11l18 12L36 11v23H0z" fill="#1e9fe8" />
        <path d="M36 11v23L16 21.500z" fill="#36c5f4" />
        <path d="M0 11l36 23H0z" fill="#1b96e2" />
      </svg>
    </TaskSlot>
    <TaskSlot w={62} line={48}>
      <svg width="33" height="28" viewBox="0 0 33 28">
        <path d="M0 6V2c0-1 .8-2 2-2h10c1 0 1.500.5 2 1l1.500 2v3z" fill="#dfa00c" />
        <path d="M0 5h13l3-2.500h15c1 0 2 .8 2 2v20c0 1-.8 2-2 2H2c-1.200 0-2-.8-2-2z" fill="#fdd05a" />
        <path d="M5.500 27V17c0-1.500 1-2.500 2.500-2.500h17c1.500 0 2.500 1 2.500 2.500v10h-6v-6.500H12V27z" fill="#3d96dc" />
      </svg>
    </TaskSlot>
    <TaskSlot w={62}>
      <svg width="36" height="36" viewBox="0 0 36 36">
        <defs>
          <linearGradient id="dev" x1="0" y1="0" x2="0" y2="1">
            <stop offset="0" stopColor="#4a45a8" />
            <stop offset=".4" stopColor="#b4b4dc" />
            <stop offset=".55" stopColor="#1464c8" />
            <stop offset="1" stopColor="#0f7cf0" />
          </linearGradient>
        </defs>
        <rect x=".7" y=".7" width="34.600" height="34.600" rx="1.500" fill="url(#dev)" stroke="#11131c" strokeWidth="1.400" />
        <text x="18" y="16.500" textAnchor="middle" fontFamily="Open Sans, sans-serif" fontWeight="800" fontSize="14" textLength="29" lengthAdjust="spacingAndGlyphs" fill="#fff">
          DEV
        </text>
        <text x="18" y="32" textAnchor="middle" fontFamily="Open Sans, sans-serif" fontWeight="800" fontSize="15" textLength="33" lengthAdjust="spacingAndGlyphs" fill="#0b2a5c">
          C++
        </text>
      </svg>
    </TaskSlot>
    <TaskSlot w={62}>
      <Office letter="W" dark="#185abd" tones={["#41a5ee", "#2b7cd3", "#185abd", "#103f91"]} />
    </TaskSlot>
    <TaskSlot w={62}>
      <Office letter="X" dark="#107c41" tones={["#33c481", "#21a366", "#107c41", "#185c37"]} />
    </TaskSlot>
    <TaskSlot w={62} line={60} lit>
      <svg width="36" height="36" viewBox="0 0 36 36">
        <defs>
          <linearGradient id="edgeTop" x1="0" y1="0" x2="1" y2=".5">
            <stop offset="0" stopColor="#1b98dc" />
            <stop offset=".5" stopColor="#35c1c9" />
            <stop offset="1" stopColor="#66e04e" />
          </linearGradient>
        </defs>
        <circle cx="18" cy="18" r="18" fill="#0f7cd6" />
        <path d="M0 16C1 7 9 0 18 0c10 0 18 7 18 15 0 6-4 9-9 9-4 0-6-1.500-5-3 1-1.500 1-2.500 1-3.500 0-5-6-8-12-8C6 9.500 2 12 0 16z" fill="url(#edgeTop)" />
        <path d="M13 18c-2 10 6 16 14 12 3-1 5-3 6.500-5-4 2-11 2.500-15-1.500-2-2-2.500-6-.5-9-2 0-4 1-5 3.500z" fill="#0c59a4" />
        <path d="M19 14c-3 2-3 7 0 9.500s10 3 14.500 1c1.500-.5 1.500 1 .5 2L30 33l6 3V20l-3 2c-4 2.500-9 2.500-11 1-1-1 1-2 1-5 0-2-2-4-4-4z" fill="#edf5f9" />
        <path d="M22 21c-1 1.500 1 3 5 3 5 0 9-3.500 9-9v-1c1 0 0 10-6 10z" fill="#5fdc5a" />
        <path d="M13 18c-2 10 6 18 13 16 4-1.500 6.500-5 7.500-7.500.3-1-.5-1-1.500-.5-4 2-10 1.500-13.500-2z" fill="#0f57a2" />
      </svg>
    </TaskSlot>
    <TaskSlot w={62}>
      <Office letter="P" dark="#c43e1c" tones={["#ff8f6b", "#ed6c47", "#d35230"]} />
    </TaskSlot>
    <TaskSlot w={61}>
      <svg width="36" height="36" viewBox="0 0 36 36">
        <defs>
          <radialGradient id="ig" cx=".25" cy="1.050" r="1.150">
            <stop offset="0" stopColor="#ffd75e" />
            <stop offset=".25" stopColor="#fb8a2e" />
            <stop offset=".5" stopColor="#e6335a" />
            <stop offset=".75" stopColor="#b52bab" />
            <stop offset="1" stopColor="#5a4fd6" />
          </radialGradient>
        </defs>
        <rect width="36" height="36" rx="5" fill="url(#ig)" />
        <g fill="none" stroke="#fff" strokeWidth="2.500">
          <rect x="5.500" y="5.500" width="25" height="25" rx="7" />
          <circle cx="18" cy="18" r="6" />
        </g>
        <circle cx="25.200" cy="10.800" r="1.700" fill="#fff" />
      </svg>
    </TaskSlot>
    <TaskSlot w={61}>
      <svg width="36" height="36" viewBox="0 0 36 36">
        <path d="M2.500 33.500L5 25.500A15.500 15.500 0 1 1 11 31.300z" fill="none" stroke="#1c8a56" strokeWidth="3.500" />
        <path d="M10.500 10c1-1 2.500-1 3 .2l1.300 3c.3 1-1.300 2-1 2.800 1.200 3 3 4.500 6 6l4 4c-7 0-15-6-14.500-13 0-1 .5-2.300 1.200-3z" fill="#1c8a56" />
      </svg>
      <CountPill>89</CountPill>
    </TaskSlot>
    <TaskSlot w={61}>
      <svg width="36" height="36" viewBox="0 0 36 36">
        <defs>
          <radialGradient id="globe" cx=".4" cy=".35" r=".7">
            <stop offset="0" stopColor="#5fb4e8" />
            <stop offset="1" stopColor="#1f67a8" />
          </radialGradient>
        </defs>
        <circle cx="19" cy="18" r="16" fill="url(#globe)" />
        <path d="M14 4l8-1 3 4-3 4-8-1zM20 12l8 2 2 5-4 3-5-4zM8 16l6 3 1 8-5-3zM17 25l7-3 2 6-7 4z" fill="#eb9346" />
        <path d="M2 4l9 3-2 8-8-2z" fill="#cfd3d6" stroke="#3b3f42" strokeWidth="2" />
        <path d="M10 8l9 3v4l-2 8h-3l1-8-6-2z" fill="#33383c" />
      </svg>
    </TaskSlot>
    <TaskSlot w={61} line={47}>
      <svg width="36" height="36" viewBox="0 0 36 36">
        <path d="M18 18L2.400 9A18 18 0 0 1 33.600 9z" fill="#e33b2e" />
        <path d="M18 18H18L33.600 9A18 18 0 0 1 18 36l7.800-13.500z" fill="#fcc31e" />
        <path d="M18 9h15.600A18 18 0 0 1 18 36z" fill="#fcc31e" />
        <path d="M2.400 9A18 18 0 0 0 18 36l7.800-13.500L18 18l-7.800 4.500z" fill="#2d9c48" />
        <path d="M2.400 9l7.800 13.500L13 12l5-3h15.600A18 18 0 0 0 2.400 9z" fill="#e33b2e" />
        <circle cx="18" cy="18" r="9" fill="#fff" />
        <circle cx="18" cy="18" r="7" fill="#3b7ded" />
      </svg>
    </TaskSlot>
    <TaskSlot w={61} line={47}>
      <Xampp s={36} />
    </TaskSlot>
    <TaskSlot w={61} line={47}>
      <svg width="36" height="36" viewBox="0 0 36 36">
        <path d="M27 0l-1 10L5 27c-.8.600-1.500.500-2 0L.6 24.800c-.8-.8-.8-1.700 0-2.500z" fill="#0d6fb8" />
        <path d="M27 36l-1-10L5 9c-.8-.6-1.500-.5-2 0L.6 11.200c-.8.8-.8 1.700 0 2.500z" fill="#1184cf" />
        <path d="M27 0l7.500 3.500c1 .5 1.500 1 1.500 2v25c0 1-.5 1.500-1.500 2L27 36z" fill="#28a8f0" />
      </svg>
    </TaskSlot>
    <Spacer />
    <Cell w={48}>
      <Line w={18} h={11} vb="0 0 18 11" sw={1.700} c="#111">
        <path d="M1 10l8-8.500 8 8.500" />
      </Line>
    </Cell>
    <Cell w={49}>
      <Line w={18} h={24} vb="0 0 18 24" sw={1.500} c="#111">
        <rect x="2" y="6.500" width="10" height="12" rx="1.500" />
        <path d="M12 10.500l4-2v8l-4-2M3 3c2.500-1.500 5.500-1.500 8 0M3 22c2.500 1.200 5.500 1.200 8 0" />
      </Line>
    </Cell>
    <Cell w={49}>
      <Line w={20} h={20} vb="0 0 20 20" sw={1.500} c="#111">
        <path d="M1.500 14C3 7.500 9 2 18.500 1.500M5.500 16C6.500 10.500 11 6.500 18.500 6M10 17.500c.5-3.500 3.500-6.500 8.500-7" stroke="#6b7178" />
        <circle cx="17" cy="17" r="1.800" fill="#111" />
        <path d="M13.500 18c0-2 1.500-4 5-4" />
      </Line>
    </Cell>
    <Cell w={47}>
      <svg width="25" height="20" viewBox="0 0 25 20">
        <rect x="6" y="5.500" width="17" height="10" fill="none" stroke="#111" strokeWidth="1.500" />
        <path d="M8 7.500h13v6H8zM23.500 8.500H25v4h-1.500zM2 1h1.300v3H2zM5.700 1H7v3H5.700zM.8 4h7.400v4c0 1.500-1.200 2.300-2.500 2.500V14H3.300v-3.500C2 10.300.8 9.500.8 8z" />
      </svg>
    </Cell>
    <Cell w={47}>
      <Line w={25} h={20} vb="0 0 25 20" sw={1.400} c="#111">
        <path d="M1 7h4l5.500-5v16L5 13H1zM14 7c1.500 2 1.500 4 0 6M17.500 4.500c3 3.500 3 7.500 0 11M21 2c4 5 4 11 0 16" />
      </Line>
    </Cell>
    <Cell w={62}>
      <Line w={21} h={22} vb="0 0 21 22" sw={1.600} c="#111">
        <path d="M9 14.500L15.500 3c1-1.800 4-.5 3 1.600L12.500 16 8 19.500zM12 7l3-5.500M19.500 10l-5 5M8 10c-4 1-7 4-7 7 0 2.500 2.500 4 5 3 2-1 2.500-3 1.500-4" />
      </Line>
    </Cell>
    <Lang>IND</Lang>
    <Cell w={0} />
    <Clock>
      <span>15:56</span>
      <span>01/06/2024</span>
    </Clock>
    <Notice>
      <svg width="24" height="24" viewBox="0 0 24 24">
        <path d="M0 0h24v18H12l-4 5v-5H0z" />
        <path d="M5 5.500h14M5 9.500h14M5 13.500h14" stroke="#e8edf5" strokeWidth="1.200" />
      </svg>
      <NoticeCount>21</NoticeCount>
    </Notice>
    <CopilotBox>
      <Copilot w={33} h={30} warm />
      <PreTag>PRE</PreTag>
    </CopilotBox>
    <EndLine />
  </Taskbar>
);

export default function App() {
  return (
    <Screen>
      <GlobalStyle />
      <Tabs />
      <Address />
      <Body>
        <Viewport>
          <Navigation />
          <Page />
          <Scroll>
            <Up />
            <Thumb />
            <Down />
          </Scroll>
        </Viewport>
        <EdgeRail />
      </Body>
      <Tasks />
    </Screen>
  );
}
